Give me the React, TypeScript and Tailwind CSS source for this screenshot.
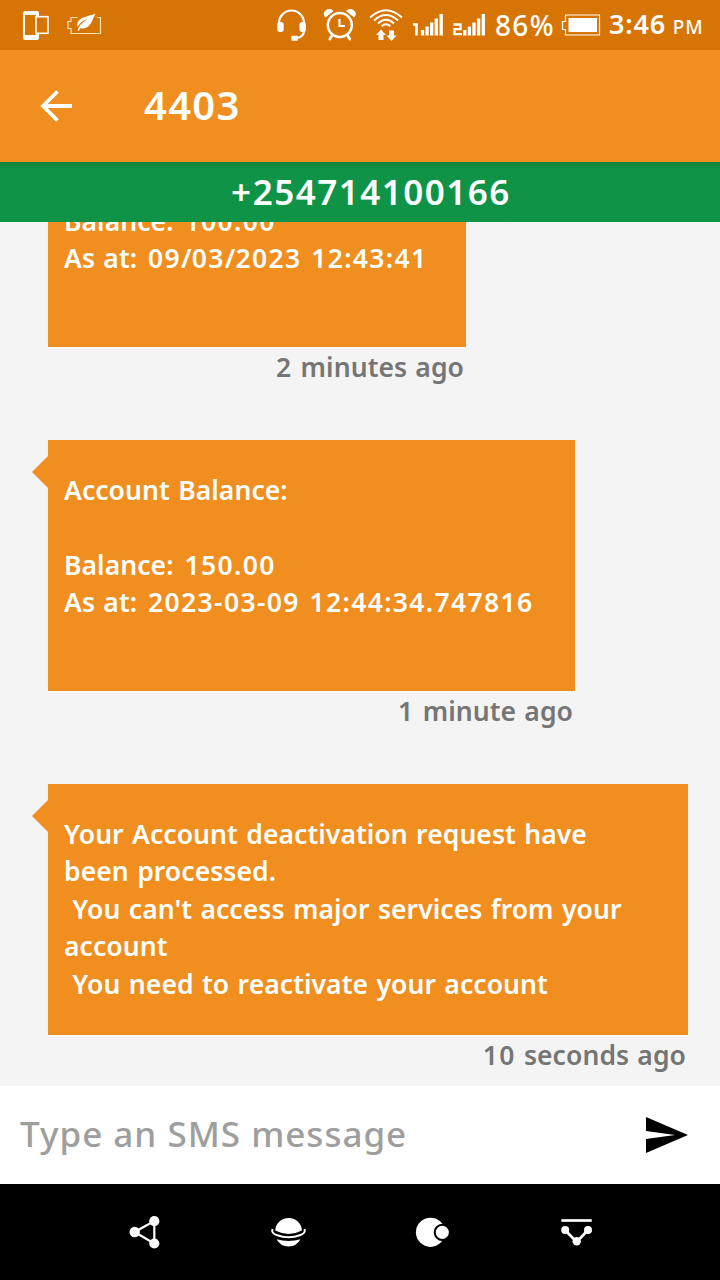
import React from "react";

type Message = { text: string; time: string; width: string };

const messages: Message[] = [
  {
    text: "Account Balance:\n\nBalance: 100.00\nAs at: 09/03/2023 12:43:41\n ",
    time: "2 minutes ago",
    width: "w-[418px]",
  },
  {
    text: "Account Balance:\n\nBalance: 150.00\nAs at: 2023-03-09 12:44:34.747816\n ",
    time: "1 minute ago",
    width: "w-[527px]",
  },
  {
    text: "Your Account deactivation request have\nbeen processed.\n You can't access major services from your\naccount\n You need to reactivate your account",
    time: "10 seconds ago",
    width: "w-[640px]",
  },
];

/* Numbers are set a little wider than words. */
function Spaced({ text }: { text: string }) {
  return (
    <>
      {text.split(/([: ]*\d[\d:.\-]*)/).map((part, i) =>
        i % 2 === 1 ? (
          <span key={i} className="tracking-[1.350px]">
            {part}
          </span>
        ) : (
          part
        ),
      )}
    </>
  );
}

function StatusIcons() {
  return (
    <svg width="80" height="32" viewBox="22 9 80 32" fill="none" stroke="#fff" className="shrink-0">
      <path fillRule="evenodd" fill="#fff" stroke="none" d="M25 11h12q2 0 2 2v3h-3v-1H25v20h11v-1h3v4q0 2-2 2H25q-2 0-2-2V13q0-2 2-2Z" />
      <rect x="36" y="16.7" width="12" height="16.6" strokeWidth="1.6" />
      <path d="M77.5 17.5h-6.500v4h-3v7h3v5h29.500v-16h-3.500" strokeWidth="1.2" stroke="#ffe3b0" />
      <path fill="#fff" stroke="none" d="M95.500 13.500c-4 3-18 2-18.500 12l.8 1.200c3-5 6-6.500 10-8-4 2.500-7 5-9 8.500l-1.200 3.500h1.400l1.200-2.500c10 2 12-8 15.300-14.700Z" />
    </svg>
  );
}

function SystemIcons() {
  return (
    <svg width="212" height="36" viewBox="275 7 212 36" fill="none" stroke="#fff" className="shrink-0">
      <path d="M279 25v-2a12.500 12.500 0 0 1 25 0v7q0 7-7 8" strokeWidth="2.200" />
      <rect x="277.300" y="22" width="6.400" height="10" rx="2.700" fill="#fff" stroke="none" />
      <rect x="299.500" y="22" width="6.400" height="10" rx="2.700" fill="#fff" stroke="none" />
      <rect x="291.300" y="35.700" width="6.500" height="5" rx="1" fill="#fff" stroke="none" />
      <circle cx="339.800" cy="25" r="12" strokeWidth="2.500" />
      <path d="M339.500 19v7h5.500" strokeWidth="2.200" />
      <path d="m332.300 35-2.500 4M347.300 35l2.500 4" strokeWidth="2.700" strokeLinecap="round" />
      <path d="M325.500 17a5 4.500 0 0 1 7.500-6ZM354.100 17a5 4.500 0 0 0-7.500-6Z" fill="#fff" strokeWidth="1" />
      <path d="M370 17.500q16-14.500 32 0M374 20.500q12-11 24 0M378 23.500q8-7.500 16 0M381.500 26.200q4.500-4 9 0" strokeWidth="2" />
      <path d="m381 29.500 5 5.500h-2.500v5h-5v-5H376ZM391.500 41l-5-5.500h2.500v-5h5v5h2.500Z" fill="#fff" stroke="none" />
      <path d="M413 24.500h3.500v11" strokeWidth="2.600" />
      <path d="M422.500 30v5.500M427.100 26.500v9M431.700 22.500v13M436.300 18.500v17M441.200 14v21.500" strokeWidth="3.300" />
      <path d="M453.500 24.500h7v4.700h-6v5h7.500" strokeWidth="2.300" />
      <path d="M464.800 30v5.500M469.400 26.500v9M474 22.500v13M478.600 18.500v17M483.300 14v21.500" strokeWidth="3.300" />
    </svg>
  );
}

function NavBar() {
  return (
    <nav className="flex h-24 shrink-0 items-center justify-between bg-black px-[125px]">
      <svg width="40" height="40" viewBox="125 1212 40 40" fill="#fff" stroke="#fff">
        <path d="M134.500 1232 154.300 1221v22.500Z" fill="none" strokeWidth="2.200" />
        <g stroke="none">
          <circle cx="134.700" cy="1232" r="5.200" />
          <circle cx="154.300" cy="1221.200" r="5.100" />
          <circle cx="154.300" cy="1243.500" r="5.100" />
        </g>
      </svg>
      <svg width="40" height="40" viewBox="268 1212 40 40" fill="#fff">
        <path d="M275.300 1230.500a13.300 12.500 0 0 1 26.600 0q-13.300 7-26.600 0Z" />
        <path d="M272.500 1229q-1.500 4 4 6 12 4.500 24 0 5.500-2 4-6" fill="none" stroke="#fff" strokeWidth="2" />
        <path d="M276.500 1239.300q12 3.500 24 0-4 7.200-12 7.200t-12-7.200Z" />
      </svg>
      <svg width="40" height="40" viewBox="412 1212 40 40" fill="#fff">
        <circle cx="430.500" cy="1232.300" r="14.600" />
        <circle cx="442.300" cy="1232.300" r="7.600" fill="#fff" stroke="#000" strokeWidth="2" />
      </svg>
      <svg width="40" height="40" viewBox="555 1212 40 40" fill="#fff">
        <path d="M561.300 1220.500h30.400" stroke="#fff" strokeWidth="2.700" />
        <path d="m565 1230 11.700 12 11.300-12" fill="none" stroke="#fff" strokeWidth="2.700" />
        <circle cx="565.200" cy="1230" r="4" />
        <circle cx="588" cy="1230" r="4" />
        <circle cx="576.700" cy="1241.300" r="4.200" />
      </svg>
    </nav>
  );
}

export default function App() {
  return (
    <div className="flex h-[1280px] w-[720px] flex-col overflow-hidden bg-[#f4f4f4] font-['Noto_Sans',sans-serif] font-semibold text-white">
      <div className="flex h-[50px] shrink-0 items-center bg-[#d67504] pl-[22px]">
        <StatusIcons />
        <div className="ml-[173px] flex items-center">
          <SystemIcons />
          <span className="ml-2 w-[66px] whitespace-nowrap text-[28px] leading-[48px] font-medium tracking-[1.300px]">86%</span>
          <svg width="40" height="24" viewBox="561 13 40 24" fill="none" className="shrink-0">
            <path d="M565.500 15h34v20h-34v-5.500h-3v-8h3Z" stroke="#fff" strokeWidth="1.200" />
            <path d="M568.500 18h28.500v14h-28.500Z" fill="#fff" />
          </svg>
          <span className="ml-2 whitespace-nowrap text-[27px] leading-[48px] tracking-[0.8px]">
            3:46 <span className="-ml-px text-[19px] font-medium tracking-[0.800px]">PM</span>
          </span>
        </div>
      </div>
      <header className="flex h-28 shrink-0 items-center bg-[#f08f1f] pl-10">
        <svg width="33" height="32" viewBox="0 0 33 32" fill="none" stroke="#fff" strokeWidth="3.800">
          <path d="M32 16H3M17.500 1.500 3 16l14.500 14.500" />
        </svg>
        <h1 className="ml-[71px] pb-[2px] text-[40px] tracking-[1.300px]">4403</h1>
      </header>
      <div className="flex h-[60px] shrink-0 items-center justify-center bg-linear-to-b from-[#10803c] to-[#0f9447] to-[12%] pl-[22px] text-[35px] leading-[58px] tracking-[1.500px]">
        +254714100166
      </div>
      <main className="flex min-h-0 flex-1 flex-col justify-end gap-[42px] overflow-hidden pl-8">
        {messages.map((m) => (
          <article key={m.time} className="flex shrink-0 items-start">
            <svg width="16" height="32" viewBox="0 0 16 32" className="mt-4 shrink-0">
              <path d="M16 0 0 16 16 32Z" fill="#f08f1f" />
            </svg>
            <div className={m.width}>
              <p className="h-[250.500px] bg-[#f08f1f] px-4 py-8 text-[26.500px] leading-[37.400px] tracking-[0.070px] whitespace-pre [word-spacing:1.400px]">
                <Spaced text={m.text} />
              </p>
              <p className="h-[51.500px] pr-[2px] text-right text-[26.500px] leading-[41px] tracking-[0.070px] text-[#757575] [word-spacing:1.200px]">
                <Spaced text={m.time} />
              </p>
            </div>
          </article>
        ))}
      </main>
      <div className="flex h-[98px] shrink-0 items-center justify-between bg-white pl-5 pr-8">
        <span className="pb-[2px] text-[35px] font-medium tracking-[1px] text-[#9e9e9e]">Type an SMS message</span>
        <svg width="42" height="36" viewBox="0 0 42 36">
          <path d="M0 0 42 18 0 36V22L29 18 0 14Z" />
        </svg>
      </div>
      <NavBar />
    </div>
  );
}
